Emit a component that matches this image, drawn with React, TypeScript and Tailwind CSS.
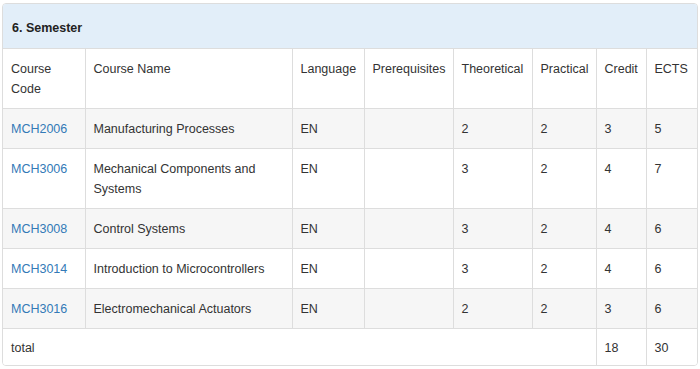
import React from "react";

const rows = [
  { code: "MCH2006", name: "Manufacturing Processes", lang: "EN", pre: "", th: "2", pr: "2", cr: "3", ects: "5" },
  { code: "MCH3006", name: "Mechanical Components and Systems", lang: "EN", pre: "", th: "3", pr: "2", cr: "4", ects: "7" },
  { code: "MCH3008", name: "Control Systems", lang: "EN", pre: "", th: "3", pr: "2", cr: "4", ects: "6" },
  { code: "MCH3014", name: "Introduction to Microcontrollers", lang: "EN", pre: "", th: "3", pr: "2", cr: "4", ects: "6" },
  { code: "MCH3016", name: "Electromechanical Actuators", lang: "EN", pre: "", th: "2", pr: "2", cr: "3", ects: "6" },
];

const td = "border border-[#dddddd] px-2 pt-[10px] pb-[9px] align-top leading-[20px]";
const tdTotal = "border border-[#dddddd] px-2 pt-[9px] pb-[7px] align-top leading-[20px]";

export default function App() {
  return (
    <div className="w-[700px] h-[369px] bg-white pt-[3px] px-[2px]" style={{ fontFamily: '"Liberation Sans", Arial, sans-serif' }}>
      <div className="w-[696px] border border-[#dddddd] rounded-[4px] overflow-hidden text-[12.5px] text-[#333333]">
        <div className="bg-[#e2eef9] h-[45px] pl-[9px] pt-[4px] flex items-center font-bold text-[12.5px] text-[#222222] border-b border-[#dddddd]">
          6. Semester
        </div>
        <table className="w-full table-fixed border-collapse border-hidden">
          <colgroup>
            <col className="w-[82px]" />
            <col className="w-[207px]" />
            <col className="w-[72px]" />
            <col className="w-[89px]" />
            <col className="w-[79px]" />
            <col className="w-[64px]" />
            <col className="w-[50px]" />
            <col className="w-[51px]" />
          </colgroup>
          <tbody>
            <tr className="bg-white">
              <td className={td}>Course Code</td>
              <td className={td}>Course Name</td>
              <td className={td}>Language</td>
              <td className={td}>Prerequisites</td>
              <td className={td}>Theoretical</td>
              <td className={td}>Practical</td>
              <td className={td}>Credit</td>
              <td className={td}>ECTS</td>
            </tr>
            {rows.map((r, i) => (
              <tr key={r.code} className={i % 2 === 0 ? "bg-[#f6f6f6]" : "bg-white"}>
                <td className={td}>
                  <a className="text-[#337ab7]">{r.code}</a>
                </td>
                <td className={td}>{r.name}</td>
                <td className={td}>{r.lang}</td>
                <td className={td}>{r.pre}</td>
                <td className={td}>{r.th}</td>
                <td className={td}>{r.pr}</td>
                <td className={td}>{r.cr}</td>
                <td className={td}>{r.ects}</td>
              </tr>
            ))}
            <tr className="bg-white">
              <td className={tdTotal} colSpan={6}>total</td>
              <td className={tdTotal}>18</td>
              <td className={tdTotal}>30</td>
            </tr>
          </tbody>
        </table>
      </div>
    </div>
  );
}
